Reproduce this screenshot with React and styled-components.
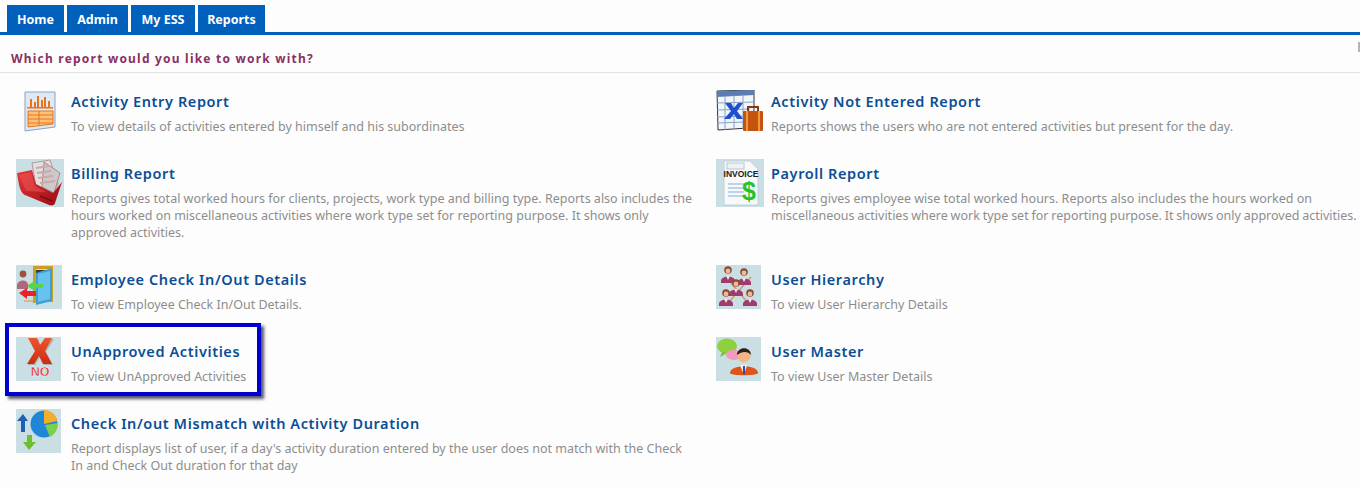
import React from "react";
import styled, { createGlobalStyle } from "styled-components";

const Global = createGlobalStyle`
  html, body { margin: 0; padding: 0; background: #fdfdfd; overflow: hidden; }
  body { font-family: "Noto Sans", "Open Sans", Arial, sans-serif; }
`;
const Page = styled.div`width:1360px;height:487px;overflow:hidden;position:relative;background:#fdfdfd;`;
const TabBar = styled.nav`
  display:flex;gap:3px;height:27px;padding:5px 0 0 7px;border-bottom:3px solid #0060bc;
`;
const Tab = styled.a`
  height:26px;padding-top:1px;width:${p=>p.$w}px;background:#0060bc;color:#fff;display:flex;align-items:center;justify-content:center;
  font:700 12.5px "Noto Sans",sans-serif;
`;
const Question = styled.h2`
  margin:0 0 14px;height:38px;border-bottom:1px solid #e2e2e2;box-sizing:border-box;padding:15px 0 0 11px;
  font:700 12px/18px "Noto Sans",sans-serif;letter-spacing:1.21px;color:#8a3164;
`;
const Grid = styled.div`display:grid;grid-template-columns:700px 644px;padding-left:16px;`;
const Item = styled.div`
  position:relative;display:flex;align-items:flex-start;padding-bottom:24px;
`;
const IconSlot = styled.div`width:55px;flex:none;padding-top:${p=>p.$top||0}px;padding-left:${p=>p.$left||0}px;box-sizing:border-box;line-height:0;`;
const Text = styled.div`width:${p=>p.$w}px;`;
const Title = styled.a`
  display:block;height:28px;margin-bottom:3px;font:600 14.5px/28px "Noto Sans",sans-serif;letter-spacing:.6px;color:#0a4f96;white-space:nowrap;
`;
const Desc = styled.p`margin:0;font:400 12.5px/17px "Noto Sans",sans-serif;color:#8d8d8d;`;
const Tight = styled.span`word-spacing:-.42px;`;
const Highlight = styled.div`
  position:absolute;left:-11px;top:-14px;width:248px;height:65px;border:4px solid #0000d2;box-shadow:3px 3px 3px #55556a;pointer-events:none;
`;
const EdgeMark = styled.div`position:absolute;right:0;top:42px;width:2px;height:10px;background:#b4b4b4;`;

const IconBg = styled.svg`display:block;`;

const EntryIcon = () => (
  <IconBg width="32" height="41" viewBox="0 0 32 41">
    <path d="M1 1H31V36L1 40Z" fill="#dfe8f4" stroke="#8fa3bd"/>
    <g fill="#e8751a"><rect x="6" y="8" width="2" height="8"/><rect x="10" y="11" width="2" height="5"/><rect x="13" y="5" width="2" height="11"/><rect x="17" y="9" width="2" height="7"/><rect x="20" y="6" width="2" height="10"/><rect x="24" y="10" width="2" height="6"/></g>
    <rect x="3" y="16" width="26" height="1.5" fill="#e8751a"/>
    <path d="M4 20H29V33L4 36Z" fill="#fbc27a" stroke="#e8751a"/>
    <path d="M4 24H29M4 28H29M4 32H29M15 20V35" stroke="#e8751a"/>
  </IconBg>
);
const FolderIcon = () => (
  <IconBg width="48" height="48" viewBox="0 0 48 48">
    <defs>
      <linearGradient id="fold" x1="0" y1="0" x2="1" y2="1">
        <stop offset="0" stopColor="#e8383a"/><stop offset="1" stopColor="#980c12"/>
      </linearGradient>
    </defs>
    <rect width="48" height="48" fill="#c9dfe4"/>
    <path d="M16 4L34 1L42 24L38 34L20 28Z" fill="#e4dfdf" stroke="#a99"/>
    <path d="M28 3L44 14L38 34L26 28Z" fill="#cfc8c8" stroke="#a88"/>
    <path d="M20 9L33 7M21 14L35 12M22 19L37 17M24 24L39 22" stroke="#c9a9a9" strokeWidth="2"/>
    <path d="M1 14L16 11L20 25L37 34L46 23L39 44C39 46 36 47 33 46L9 36C6 35 4 30 3 26Z" fill="url(#fold)"/>
    <path d="M3 16L15 13L19 27L30 33L10 32Z" fill="#f06060" opacity=".45"/>
    <path d="M24 37L36 42" stroke="#7d0c10" strokeWidth="1.5"/>
  </IconBg>
);
const XlsIcon = () => (
  <IconBg width="48" height="42" viewBox="0 0 48 42">
    <path d="M1 1L38 0V20L32 38L2 40Z" fill="#f2f6fb" stroke="#333"/>
    <path d="M1 1L38 0V5L1 7Z" fill="#5b7db5"/>
    <path d="M1 13L38 12M1 20L34 19M1 27L30 26M1 33L30 32M9 6V40M18 5V39M27 5V39" stroke="#8aa2c6"/>
    <path d="M9 13H15L18 18L22 13H27L21 21L27 29H21L18 24L14 29H8L15 21Z" fill="#1d4fd0"/>
    <rect x="27" y="21" width="20" height="20" rx="1" fill="#c4530f"/>
    <path d="M32 21V17H42V21" fill="none" stroke="#8a3a08" strokeWidth="2"/>
    <path d="M31 21V41M43 21V41" stroke="#f09a40" strokeWidth="2"/>
  </IconBg>
);
const InvoiceIcon = () => (
  <IconBg width="48" height="48" viewBox="0 0 48 48">
    <rect width="48" height="48" fill="#c9dfe4"/>
    <path d="M8 2H34L42 10V46H8Z" fill="#f7f9fa" stroke="#c2cfd6"/>
    <rect x="11" y="4" width="17" height="6" fill="#eef2f5" stroke="#b8c8d0"/>
    <text x="25" y="18" textAnchor="middle" fontFamily="Liberation Sans" fontWeight="700" fontSize="8.5" fill="#1a1a1a">INVOICE</text>
    <path d="M12 25H28M12 29H28M12 33H28M12 37H28" stroke="#a8c8e8" strokeWidth="1.5"/>
    <text x="33" y="41" textAnchor="middle" fontFamily="Liberation Sans" fontWeight="700" fontSize="25" fill="#22c42c">$</text>
  </IconBg>
);
const DoorIcon = () => (
  <IconBg width="46" height="44" viewBox="0 0 46 44">
    <rect width="46" height="44" fill="#c9dfe4"/>
    <path d="M17 1H37V37H32V4H20V38H17Z" fill="#c9a020"/>
    <path d="M20 5H35V35H20Z" fill="#3c3a30"/>
    <path d="M20 8L36 3V36L20 40Z" fill="#3f9fd8"/>
    <path d="M22 9L34 6V34L22 37Z" fill="#66c2ee"/>
    <circle cx="7" cy="9" r="3.4" fill="#9a523e"/>
    <path d="M1 20C2 14 12 14 12 20V24H1Z" fill="#b0687e"/>
    <path d="M12 20L19 16V19H27V23H19V26L12 22Z" fill="#5ed24a"/>
    <path d="M3 28L11 23V26H20V31H11V34Z" fill="#e8242a"/>
    <path d="M8 36H20" stroke="#c7a03a"/>
  </IconBg>
);
const HierIcon = () => {
  const P = ({ x, y }) => (
    <g transform={`translate(${x} ${y})`}>
      <circle cx="7" cy="4" r="3.8" fill="#8a4a34"/>
      <circle cx="7" cy="5" r="2.4" fill="#f0b898"/>
      <path d="M0 15C0 9 14 9 14 15V17H0Z" fill="#a33a6e"/>
      <path d="M5 10H9L7 14Z" fill="#f4e8ee"/>
    </g>
  );
  return (
    <IconBg width="45" height="44" viewBox="0 0 45 44">
      <rect width="45" height="44" fill="#c9dfe4"/>
      <path d="M10 12L32 38M35 12L12 38" stroke="#d29a60" strokeWidth="1.5"/>
      <P x={5} y={1}/><P x={21} y={3}/><P x={13} y={14}/><P x={3} y={24}/><P x={27} y={24}/>
    </IconBg>
  );
};
const UserIcon = () => (
  <IconBg width="45" height="44" viewBox="0 0 45 44">
    <rect width="45" height="44" fill="#c9dfe4"/>
    <ellipse cx="11" cy="9" rx="10" ry="7.5" fill="#8ed03e"/>
    <path d="M6 15L4 20L11 16Z" fill="#7cc030"/>
    <ellipse cx="18" cy="18" rx="8" ry="5" fill="#f29ac0"/>
    <circle cx="28" cy="19" r="6.5" fill="#f5b687"/>
    <path d="M21 18C21 9 35 9 35 18C32 14 26 14 21 18Z" fill="#2a2018"/>
    <path d="M14 36C14 27 42 27 42 36C42 39 14 39 14 36Z" fill="#e0541a"/>
    <path d="M24 28H31L28 38Z" fill="#f4f4f4"/>
    <path d="M27 29H29L29 37L28 38L27 37Z" fill="#2a4ea0"/>
  </IconBg>
);
const NoIcon = () => (
  <IconBg width="45" height="44" viewBox="0 0 45 44">
    <defs>
      <linearGradient id="xred" x1="0" y1="0" x2="0" y2="1">
        <stop offset="0" stopColor="#f0552a"/><stop offset="1" stopColor="#cc2c12"/>
      </linearGradient>
    </defs>
    <rect width="45" height="44" fill="#c9dfe4"/>
    <path d="M13 2H22L25 9L30 2H38L30 15L37 28H28L24 20L19 28H12L20 15Z" fill="#8a8a80" opacity=".5"/>
    <path d="M12 1H21L24 8L29 1H36L29 14L36 27H27L23 19L18 27H11L19 14Z" fill="url(#xred)"/>
    <text x="24" y="39" textAnchor="middle" fontFamily="Liberation Sans" fontWeight="700" fontSize="12.5" fill="#e02a2a" stroke="#fff" strokeWidth=".35">NO</text>
  </IconBg>
);
const PieIcon = () => (
  <IconBg width="45" height="44" viewBox="0 0 45 44">
    <rect width="45" height="44" fill="#c9dfe4"/>
    <circle cx="28" cy="15" r="13.5" fill="#1f87d8"/>
    <path d="M28 15V1C35 1 41 6 41 12Z" fill="#f0ad2e"/>
    <path d="M29 16L42 14C42 21 38 26 34 28Z" fill="#7ed04a"/>
    <path d="M5 23V12H1L7 5L12 12H9V23Z" fill="#1f5fb4"/>
    <path d="M11 26V33H7L13 41L20 33H16V26Z" fill="#6cc02c"/>
  </IconBg>
);

const left = "Reports gives total worked hours for clients, projects, work type and billing type. Reports also includes the hours worked on miscellaneous activities where work type set for reporting purpose. It shows only approved activities.";
const right = (
  <>
    Reports gives employee wise total worked hours. Reports also includes the hours worked on{" "}
    <Tight>miscellaneous activities where work type set for reporting purpose. It shows only approved activities.</Tight>
  </>
);

const reports = [
  { t:"Activity Entry Report", d:"To view details of activities entered by himself and his subordinates", I:EntryIcon, top:4, left:8 },
  { t:"Activity Not Entered Report", d:"Reports shows the users who are not entered activities but present for the day.", I:XlsIcon, top:3 },
  { t:"Billing Report", d:left, I:FolderIcon },
  { t:"Payroll Report", d:right, I:InvoiceIcon },
  { t:"Employee Check In/Out Details", d:"To view Employee Check In/Out Details.", I:DoorIcon },
  { t:"User Hierarchy", d:"To view User Hierarchy Details", I:HierIcon },
  { t:"UnApproved Activities", d:"To view UnApproved Activities", I:NoIcon, hi:true },
  { t:"User Master", d:"To view User Master Details", I:UserIcon },
  { t:"Check In/out Mismatch with Activity Duration", d:"Report displays list of user, if a day's activity duration entered by the user does not match with the Check In and Check Out duration for that day", I:PieIcon },
];

export default function App() {
  return (
    <Page>
      <Global/>
      <TabBar>
        <Tab $w={57}>Home</Tab><Tab $w={61}>Admin</Tab><Tab $w={64}>My ESS</Tab><Tab $w={67}>Reports</Tab>
      </TabBar>
      <EdgeMark/>
      <Question>Which report would you like to work with?</Question>
      <Grid>
        {reports.map((r,i)=>(
          <Item key={r.t}>
            {r.hi && <Highlight/>}
            <IconSlot $top={r.top} $left={r.left}><r.I/></IconSlot>
            <Text $w={i%2?600:624}>
              <Title>{r.t}</Title>
              <Desc>{r.d}</Desc>
            </Text>
          </Item>
        ))}
      </Grid>
    </Page>
  );
}
